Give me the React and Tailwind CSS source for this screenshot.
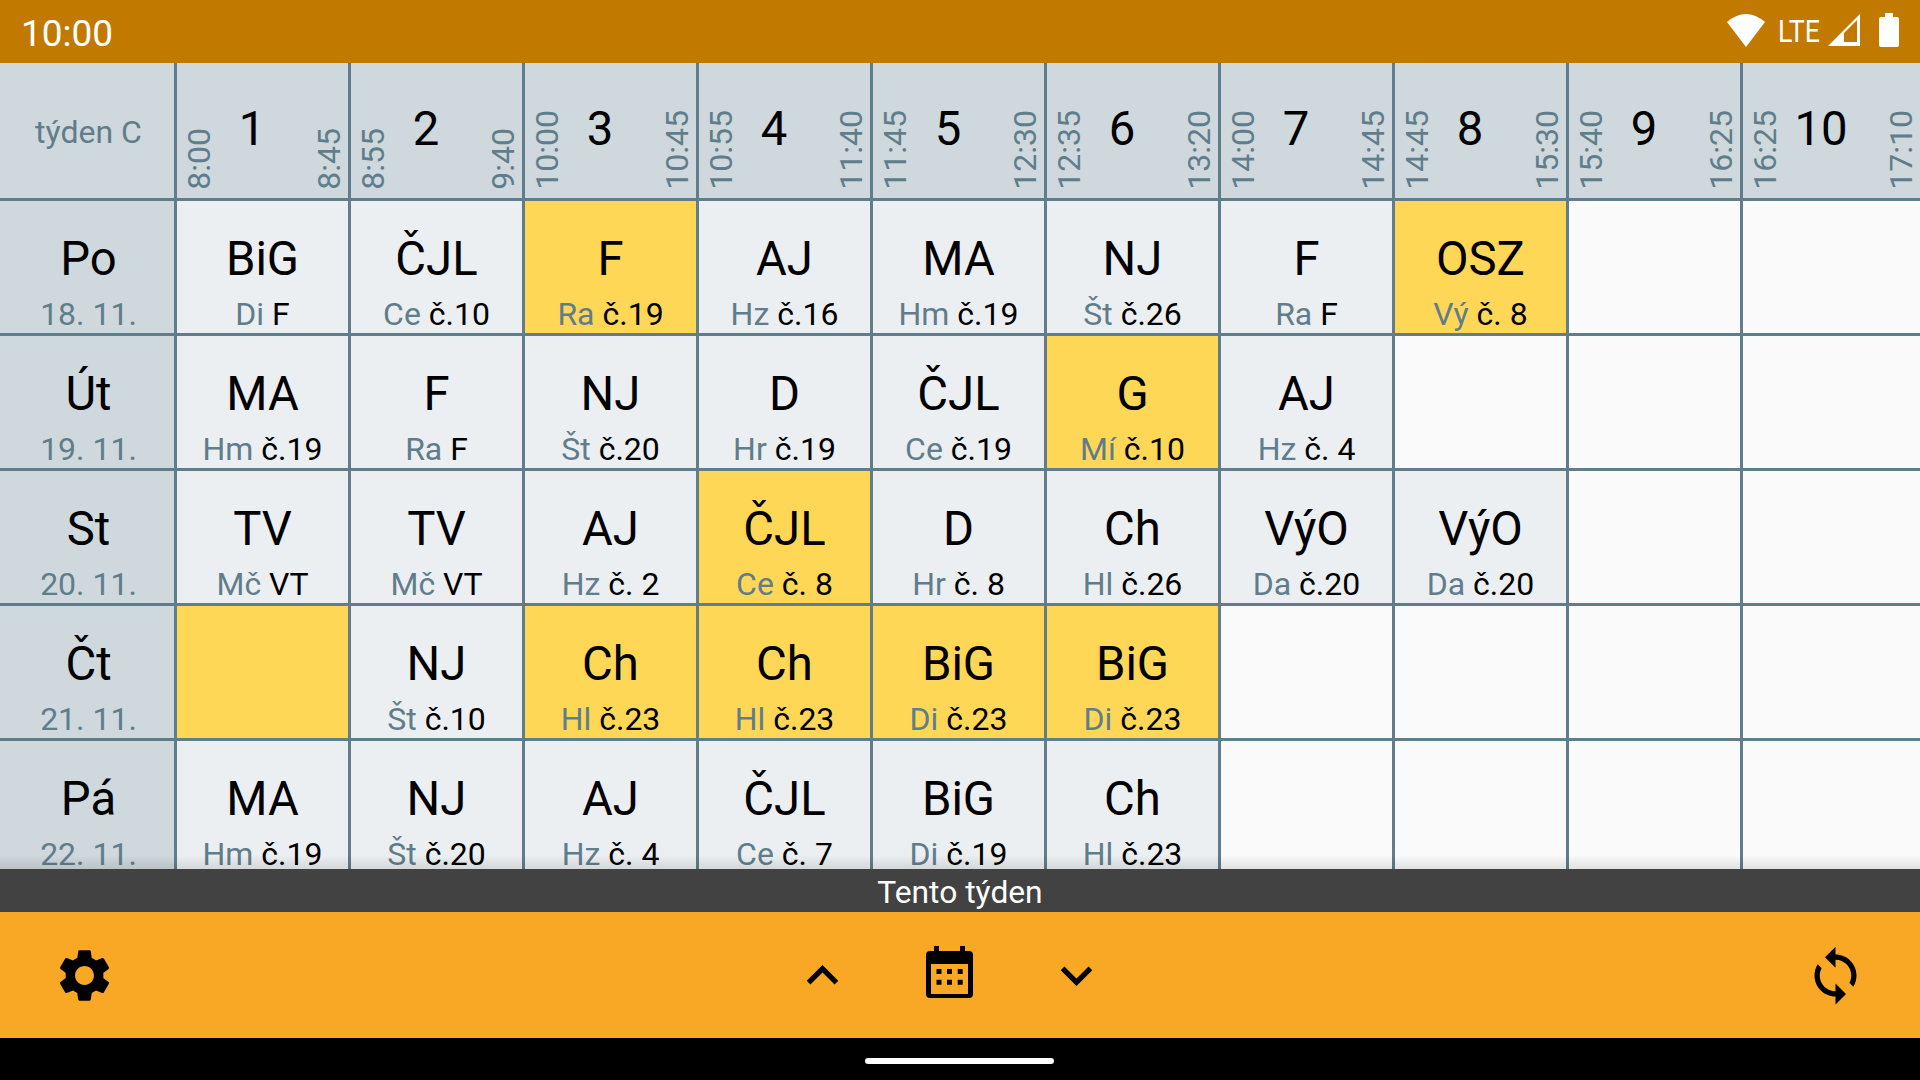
import React from 'react'

const hours = [
  ['1', '8:00', '8:45'],
  ['2', '8:55', '9:40'],
  ['3', '10:00', '10:45'],
  ['4', '10:55', '11:40'],
  ['5', '11:45', '12:30'],
  ['6', '12:35', '13:20'],
  ['7', '14:00', '14:45'],
  ['8', '14:45', '15:30'],
  ['9', '15:40', '16:25'],
  ['10', '16:25', '17:10'],
]

// [subject, teacher, room, highlighted]
const days = [
  {
    name: 'Po', date: '18. 11.',
    lessons: [
      ['BiG', 'Di', 'F'], ['ČJL', 'Ce', 'č.10'], ['F', 'Ra', 'č.19', true], ['AJ', 'Hz', 'č.16'], ['MA', 'Hm', 'č.19'],
      ['NJ', 'Št', 'č.26'], ['F', 'Ra', 'F'], ['OSZ', 'Vý', 'č. 8', true], null, null,
    ],
  },
  {
    name: 'Út', date: '19. 11.',
    lessons: [
      ['MA', 'Hm', 'č.19'], ['F', 'Ra', 'F'], ['NJ', 'Št', 'č.20'], ['D', 'Hr', 'č.19'], ['ČJL', 'Ce', 'č.19'],
      ['G', 'Mí', 'č.10', true], ['AJ', 'Hz', 'č. 4'], null, null, null,
    ],
  },
  {
    name: 'St', date: '20. 11.',
    lessons: [
      ['TV', 'Mč', 'VT'], ['TV', 'Mč', 'VT'], ['AJ', 'Hz', 'č. 2'], ['ČJL', 'Ce', 'č. 8', true], ['D', 'Hr', 'č. 8'],
      ['Ch', 'Hl', 'č.26'], ['VýO', 'Da', 'č.20'], ['VýO', 'Da', 'č.20'], null, null,
    ],
  },
  {
    name: 'Čt', date: '21. 11.',
    lessons: [
      ['', '', '', true], ['NJ', 'Št', 'č.10'], ['Ch', 'Hl', 'č.23', true], ['Ch', 'Hl', 'č.23', true], ['BiG', 'Di', 'č.23', true],
      ['BiG', 'Di', 'č.23', true], null, null, null, null,
    ],
  },
  {
    name: 'Pá', date: '22. 11.',
    lessons: [
      ['MA', 'Hm', 'č.19'], ['NJ', 'Št', 'č.20'], ['AJ', 'Hz', 'č. 4'], ['ČJL', 'Ce', 'č. 7'], ['BiG', 'Di', 'č.19'],
      ['Ch', 'Hl', 'č.23'], null, null, null, null,
    ],
  },
]

const Time = ({ children }) => (
  <span className="[writing-mode:vertical-rl] rotate-180 text-[32px] leading-[24px] text-[#607d8b] whitespace-nowrap">
    {children}
  </span>
)

const Cell = ({ lesson }) => {
  if (!lesson) return <div className="bg-[#fafafa]" />
  const [subject, teacher, room, hi] = lesson
  return (
    <div className={`flex flex-col items-center pt-[31px] ${hi ? 'bg-[#ffd757]' : 'bg-[#eceff1]'}`}>
      <div className="text-[47.25px] leading-[55px] text-black h-[55px]">{subject}</div>
      <div className="text-[32px] leading-[37px] mt-[9px] whitespace-nowrap">
        <span className="text-[#607d8b]">{teacher}</span> <span className="text-black">{room}</span>
      </div>
    </div>
  )
}

const Icon = ({ d, className = '' }) => (
  <svg viewBox="0 0 24 24" className={`w-[63px] h-[63px] fill-black ${className}`}>
    <path d={d} />
  </svg>
)

export default function App() {
  return (
    <div className="w-[1920px] h-[1080px] flex flex-col overflow-hidden font-['Roboto',sans-serif]">
      {/* status bar */}
      <div className="h-[63px] shrink-0 bg-[#c17900] flex items-center justify-between pl-[21px] pr-[21px] text-white">
        <span className="text-[37px] leading-[43px] mt-[3px]">10:00</span>
        <div className="flex items-start pt-[1px]">
          <svg viewBox="0 0 38 33" className="w-[38px] h-[33px] fill-white">
            <path d="M0 8 Q19 -8 38 8 L19 33 Z" />
          </svg>
          <span className="w-[50px] ml-[13px] -mt-[1px] text-[31.5px] leading-[37px] scale-x-[0.85] origin-left">LTE</span>
          <svg viewBox="0 0 32 32" className="w-[32px] h-[32px] fill-white">
            <path fillRule="evenodd" d="M32 0V32H0Z M16 19V28H29V6Z" />
          </svg>
          <svg viewBox="0 0 20 34" className="w-[20px] h-[34px] ml-[19px] -mt-[1px] fill-white">
            <path d="M6 0H14V4H18Q20 4 20 6V32Q20 34 18 34H2Q0 34 0 32V6Q0 4 2 4H6Z" />
          </svg>
        </div>
      </div>

      {/* timetable */}
      <div className="relative flex-1 min-h-0 overflow-hidden">
        <div className="grid grid-cols-[174px_repeat(9,171px)_177px] grid-rows-[135px] auto-rows-[132px] gap-[3px] bg-[#607d8b]">
          <div className="bg-[#cfd8dc] flex items-center justify-center pl-[3px] pt-[4px] text-[32px] leading-[37px] text-[#607d8b]">
            týden C
          </div>
          {hours.map(([num, from, to]) => (
            <div key={num} className="bg-[#cfd8dc] flex items-end justify-between pl-[10px] pr-[7px] pb-[8px]">
              <Time>{from}</Time>
              <div className="flex-1 self-start text-center text-[47.25px] leading-[55px] text-black pt-[39px] pr-[24px]">{num}</div>
              <Time>{to}</Time>
            </div>
          ))}
          {days.map((day) => (
            <React.Fragment key={day.name}>
              <div className="bg-[#cfd8dc] flex flex-col items-center pl-[3px] pt-[31px]">
                <div className="text-[47.25px] leading-[55px] text-black">{day.name}</div>
                <div className="text-[32px] leading-[37px] mt-[9px] text-[#607d8b]">{day.date}</div>
              </div>
              {day.lessons.map((lesson, i) => (
                <Cell key={i} lesson={lesson} />
              ))}
            </React.Fragment>
          ))}
        </div>
        <div className="absolute left-0 right-0 bottom-0 h-[14px] bg-gradient-to-b from-transparent to-black/10" />
      </div>

      {/* week label */}
      <div className="h-[43px] shrink-0 bg-[#424242] flex items-center justify-center pt-[3px] text-white text-[31.75px] leading-[37px]">
        Tento týden
      </div>

      {/* toolbar */}
      <div className="h-[126px] shrink-0 bg-[#f9a825] flex items-center justify-between pl-[53px] pr-[53px]">
        <Icon d="M19.14 12.94c.04-.3.06-.61.06-.94 0-.32-.02-.64-.07-.94l2.03-1.58c.18-.14.23-.41.12-.61l-1.92-3.32c-.12-.22-.37-.29-.59-.22l-2.39.96c-.5-.38-1.03-.7-1.62-.94l-.36-2.54c-.04-.24-.24-.41-.48-.41h-3.84c-.24 0-.43.17-.47.41l-.36 2.54c-.59.24-1.13.57-1.62.94l-2.39-.96c-.22-.08-.47 0-.59.22L2.74 8.87c-.12.21-.08.47.12.61l2.03 1.58c-.05.3-.09.63-.09.94s.02.64.07.94l-2.03 1.58c-.18.14-.23.41-.12.61l1.92 3.32c.12.22.37.29.59.22l2.39-.96c.5.38 1.03.7 1.62.94l.36 2.54c.05.24.24.41.48.41h3.84c.24 0 .44-.17.47-.41l.36-2.54c.59-.24 1.13-.56 1.62-.94l2.39.96c.22.08.47 0 .59-.22l1.92-3.32c.12-.22.07-.47-.12-.61l-2.01-1.58zM12 15.6c-1.98 0-3.6-1.62-3.6-3.6s1.62-3.6 3.6-3.6 3.6 1.62 3.6 3.6-1.62 3.6-3.6 3.6z" />
        <div className="flex items-center gap-[64px] mr-[21px]">
          <Icon d="M7.41 15.41L12 10.83l4.59 4.58L18 14l-6-6-6 6z" />
          <div className="w-[63px] h-[63px] flex justify-center -mt-[5px]">
            <svg viewBox="0 0 47 52" className="w-[47px] h-[52px] mt-[5px] fill-black">
              <path
                fillRule="evenodd"
                d="M8 0H13V5H34V0H39V5H43Q47 5 47 9V48Q47 52 43 52H4Q0 52 0 48V9Q0 5 4 5H8Z M5 18V48H42V18Z"
              />
              <path d="M10.5 23h5v5h-5z M21 23h5v5h-5z M31.7 23h5v5h-5z M10.5 33.7h5v5h-5z M21 33.7h5v5h-5z M31.7 33.7h5v5h-5z" />
            </svg>
          </div>
          <Icon d="M7.41 8.59L12 13.17l4.59-4.58L18 10l-6 6-6-6z" />
        </div>
        <Icon d="M12 4V1L8 5l4 4V6c3.31 0 6 2.69 6 6 0 1.01-.25 1.97-.7 2.8l1.46 1.46C19.54 15.03 20 13.57 20 12c0-4.42-3.58-8-8-8zm0 14c-3.31 0-6-2.69-6-6 0-1.01.25-1.97.7-2.8L5.24 7.74C4.46 8.97 4 10.43 4 12c0 4.42 3.58 8 8 8v3l4-4-4-4v3z" />
      </div>

      {/* nav bar */}
      <div className="h-[42px] shrink-0 bg-black flex justify-center pt-[20px]">
        <div className="w-[189px] h-[6px] -ml-[2px] rounded-full bg-white" />
      </div>
    </div>
  )
}
